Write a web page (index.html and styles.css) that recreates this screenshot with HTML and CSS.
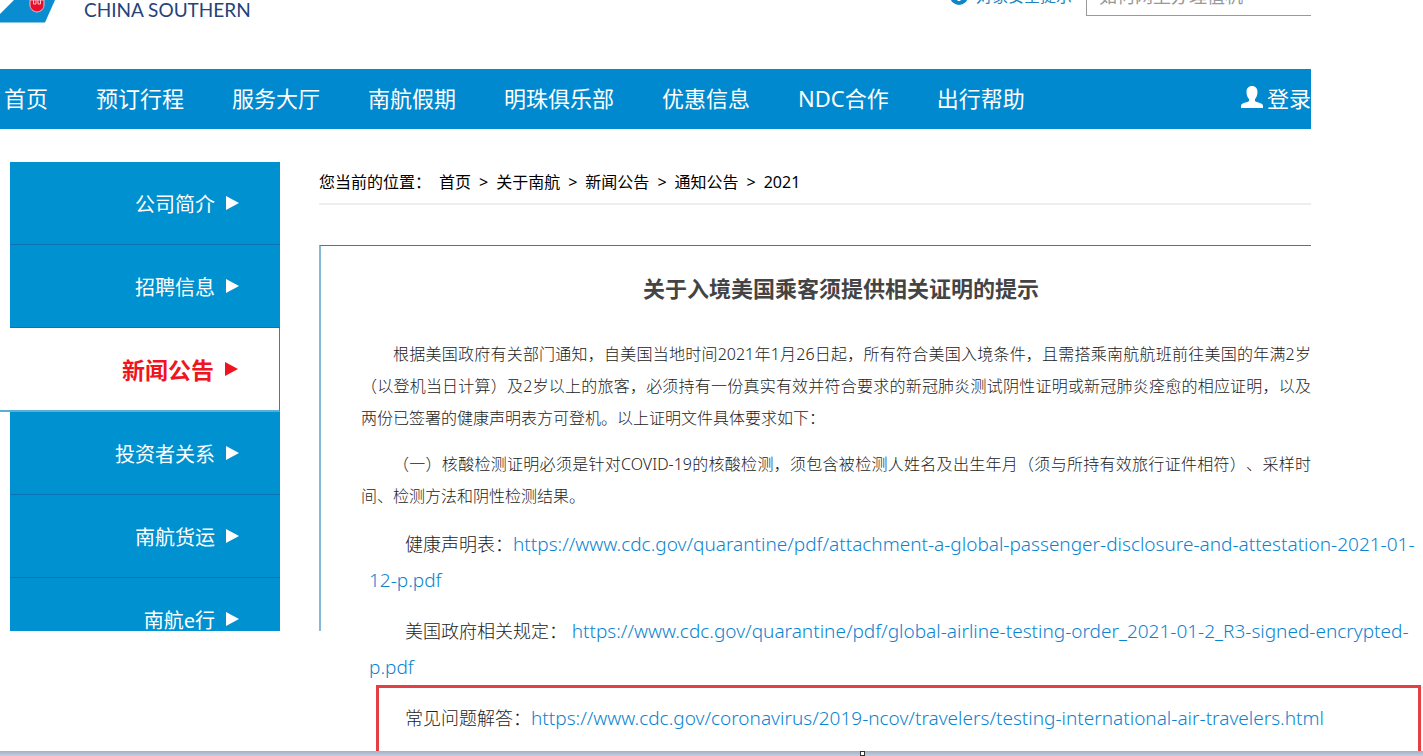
FILE: index.html
```html
<!DOCTYPE html>
<html lang="zh-CN">
<head>
  <meta charset="UTF-8">
  <meta name="viewport" content="width=device-width, initial-scale=1">
  <title>关于入境美国乘客须提供相关证明的提示</title>
  <link rel="stylesheet" href="styles.css">
</head>
<body>

<div class="page">

  <!-- Logo and search -->
  <header class="header">
    <a class="logo" href="#">
      <svg class="logo-mark" width="56" height="23" viewBox="0 0 56 23" aria-hidden="true">
        <path d="M0 14 L14 0 H55 L45 22.500 H0 Z" fill="#0a8cd0"/>
        <path d="M30 0 H44 V5 C44 9 41 11.500 37 12 C33 11.500 30 9 30 5 Z" fill="#e60f2d" stroke="#f3b9c4" stroke-width="1"/>
        <path d="M33.500 0 V4 H36 V0 M38 0 V4 H40.500 V0" stroke="#f6c4cc" stroke-width="1" fill="none"/>
      </svg>
      <span class="logo-text">CHINA SOUTHERN</span>
    </a>
    <div class="header-tools">
      <a class="safety-link" href="#">
        <svg width="18" height="18" viewBox="0 0 18 18" aria-hidden="true">
          <circle cx="9" cy="9" r="9" fill="#0f86c8"/>
          <path d="M9 4 V14" stroke="#fff" stroke-width="3" fill="none"/>
        </svg>
        <span>对象安全提示</span>
      </a>
      <input class="search-input" type="text" placeholder="如何网上办理值机" aria-label="搜索">
    </div>
  </header>

  <!-- Main navigation -->
  <nav class="main-nav">
    <a href="#">首页</a>
    <a href="#">预订行程</a>
    <a href="#">服务大厅</a>
    <a href="#">南航假期</a>
    <a href="#">明珠俱乐部</a>
    <a href="#">优惠信息</a>
    <a href="#">NDC合作</a>
    <a href="#">出行帮助</a>
    <a class="login" href="#">
      <svg width="22" height="22" viewBox="0 0 22 22" aria-hidden="true">
        <path d="M11 0 C14.500 0 16.500 2.500 16.500 6 C16.500 9 15.500 11.500 14 13 V15 C15 16.500 21.500 16.500 22 19.500 V22 H0 V19.500 C0.500 16.500 7 16.500 8 15 V13 C6.500 11.500 5.500 9 5.500 6 C5.500 2.500 7.500 0 11 0 Z" fill="#fff"/>
      </svg>
      <span>登录</span>
    </a>
  </nav>

  <div class="layout">
    <!-- Section menu -->
    <nav class="side-menu">
      <a href="#">公司简介<span class="arrow"></span></a>
      <a href="#">招聘信息<span class="arrow"></span></a>
      <a class="active" href="#">新闻公告<span class="arrow"></span></a>
      <a href="#">投资者关系<span class="arrow"></span></a>
      <a href="#">南航货运<span class="arrow"></span></a>
      <a href="#">南航e行<span class="arrow"></span></a>
    </nav>

    <main class="content">
      <div class="breadcrumb">
        <span>您当前的位置：</span>
        <a href="#">首页</a><span>&gt;</span>
        <a href="#">关于南航</a><span>&gt;</span>
        <a href="#">新闻公告</a><span>&gt;</span>
        <a href="#">通知公告</a><span>&gt;</span>
        <a href="#">2021</a>
      </div>

      <article class="notice">
        <h1>关于入境美国乘客须提供相关证明的提示</h1>
        <p>根据美国政府有关部门通知，自美国当地时间2021年1月26日起，所有符合美国入境条件，且需搭乘南航航班前往美国的年满2岁（以登机当日计算）及2岁以上的旅客，必须持有一份真实有效并符合要求的新冠肺炎测试阴性证明或新冠肺炎痊愈的相应证明，以及两份已签署的健康声明表方可登机。以上证明文件具体要求如下：</p>
        <p>（一）核酸检测证明必须是针对COVID-19的核酸检测，须包含被检测人姓名及出生年月（须与所持有效旅行证件相符）、采样时间、检测方法和阴性检测结果。</p>
      </article>

      <!-- Related documents -->
      <section class="documents">
        <p>健康声明表：<a href="#">https://www.cdc.gov/quarantine/pdf/attachment-a-global-passenger-disclosure-and-attestation-2021-01-<br>12-p.pdf</a></p>
        <p>美国政府相关规定： <a href="#">https://www.cdc.gov/quarantine/pdf/global-airline-testing-order_2021-01-2_R3-signed-encrypted-<br>p.pdf</a></p>
        <div class="highlight">常见问题解答：<a href="#">https://www.cdc.gov/coronavirus/2019-ncov/travelers/testing-international-air-travelers.html</a></div>
      </section>
    </main>
  </div>

  <div class="bottom-bar"><span class="handle"></span></div>
</div>

</body>
</html>
```

FILE: styles.css
```css
* {
  box-sizing: border-box;
  margin: 0;
  padding: 0;
}
body {
  background: #fff;
  color: #444;
  font-family: "Noto Sans", "Noto Sans CJK SC", sans-serif;
  font-size: 16px;
  overflow: hidden;
  text-spacing-trim: space-all;
}
a {
  color: inherit;
  text-decoration: none;
}

/* Header */
.header {
  display: flex;
  justify-content: space-between;
  height: 69px;
  margin-right: 112px;
  overflow: hidden;
}
.logo {
  display: flex;
  gap: 28px;
}
.logo-text {
  color: #25437a;
  font-family: Lato, sans-serif;
  font-size: 19px;
  line-height: 20px;
}
.header-tools {
  display: flex;
  align-items: flex-start;
  gap: 14px;
  margin-top: -16px;
}
.safety-link {
  display: flex;
  align-items: center;
  gap: 8px;
  color: #1a86c6;
  line-height: 24px;
}
.search-input {
  width: 225px;
  height: 32px;
  padding: 0 12px 8px;
  border: 1px solid #999;
  border-right: none;
  font: inherit;
  font-size: 18px;
}
.search-input::placeholder {
  color: #999;
}

/* Blue navigation bar */
.main-nav {
  display: flex;
  align-items: center;
  gap: 48px;
  height: 60px;
  margin-right: 112px;
  padding: 0 0 4px 4px;
  background: #0089cf;
  color: #fff;
  font-size: 22px;
  white-space: nowrap;
}
.login {
  display: flex;
  align-items: center;
  gap: 4px;
  margin-left: auto;
}

/* Side menu and content */
.layout {
  display: flex;
  align-items: flex-start;
  gap: 39px;
  padding-top: 33px;
}
.side-menu {
  flex: 0 0 280px;
  height: 469px;
  overflow: hidden;
}
.side-menu a {
  display: flex;
  align-items: center;
  justify-content: flex-end;
  gap: 11px;
  height: 83px;
  margin-left: 10px;
  padding-right: 41px;
  border-bottom: 1px solid #0a74b4;
  background: #0091d0;
  color: #fff;
  font-size: 20px;
}
.side-menu .active {
  height: 84px;
  margin-left: 0;
  border-right: 1px solid #2a86a8;
  border-bottom: 2px solid #58b0d4;
  background: #fff;
  color: #f0141e;
  font-size: 23px;
  font-weight: bold;
}
.arrow {
  border: 7px solid transparent;
  border-right: none;
  border-left: 13px solid currentColor;
}

.content {
  flex: 1;
  min-width: 0;
}
.breadcrumb {
  display: flex;
  gap: 8px;
  height: 43px;
  margin-right: 112px;
  border-bottom: 2px solid #eee;
  color: #000;
  line-height: 40px;
}

.notice {
  height: 386px;
  margin-top: 40px;
  margin-right: 112px;
  padding: 22px 0 0 40px;
  border-top: 1px solid #2686a8;
  border-left: 2px solid #84b9d6;
}
.notice h1 {
  margin-bottom: 30px;
  padding-left: 10px;
  font-size: 22px;
  line-height: 40px;
  text-align: center;
}
.notice p {
  margin-bottom: 14px;
  color: #222;
  font-weight: 300;
  line-height: 32px;
  text-align: justify;
  text-indent: 2em;
}

/* Document links run past the notice frame */
.documents {
  margin-top: -105px;
  color: #222;
  font-size: 18px;
  font-weight: 300;
  line-height: 36px;
  white-space: nowrap;
}
.documents p {
  margin: 0 0 15px 50px;
  text-indent: 2em;
}
.documents a {
  color: #0a84d0;
  font-size: 19px;
  line-height: 24px;
}
.highlight {
  height: 66px;
  margin: -15px 2px 0 57px;
  padding: 12px 0 0 26px;
  border: 3px solid #e34045;
  border-bottom: none;
}

.bottom-bar {
  display: flex;
  height: 5px;
  background: linear-gradient(#a4afc0, #c3cfe2);
}
.handle {
  width: 5px;
  height: 5px;
  margin-left: 860px;
  border: 1px solid #333;
  background: #fff;
}
```
